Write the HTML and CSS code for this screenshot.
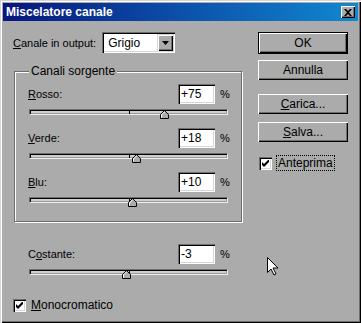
FILE: index.html
```
<!DOCTYPE html>
<html lang="it">
<head>
    <meta charset="UTF-8">
    <title>Miscelatore canale</title>
    <link rel="stylesheet" href="styles.css">
</head>
<body>
<div class="window">
    <div class="titlebar">
        <span class="title">Miscelatore canale</span>
        <span class="close">
            <svg width="8" height="7" viewBox="0 0 8 7"><path d="M0 0h2l2 2 2-2h2L5 3.5 8 7H6L4 5 2 7H0l3-3.5z" fill="#000"/></svg>
        </span>
    </div>
    <div class="content">
        <div class="left">
            <div class="output-row">
                <span class="lbl"><u>C</u>anale in output:</span>
                <div class="select">
                    <span class="select-text">Grigio</span>
                    <span class="select-btn">
                        <svg width="7" height="4" viewBox="0 0 7 4"><path d="M0 0h7L3.5 4z" fill="#000"/></svg>
                    </span>
                </div>
            </div>
            <div class="group">
                <span class="legend">Canali sorgente</span>
                <div class="chan">
                    <div class="chan-row">
                        <span class="chan-lbl"><u>R</u>osso:</span>
                        <span class="field">+75</span>
                        <span class="pct">%</span>
                    </div>
                    <div class="slider">
                        <svg class="thumb" style="left: 68.75%" width="9" height="9" viewBox="0 0 9 9"><path d="M.5 8.5v-4l4-4 4 4v4z" fill="#ababab" stroke="#000"/><path d="M1.5 7.5v-2.6l3-3" fill="none" stroke="#fff"/></svg>
                    </div>
                </div>
                <div class="chan">
                    <div class="chan-row">
                        <span class="chan-lbl"><u>V</u>erde:</span>
                        <span class="field">+18</span>
                        <span class="pct">%</span>
                    </div>
                    <div class="slider">
                        <svg class="thumb" style="left: 54.5%" width="9" height="9" viewBox="0 0 9 9"><path d="M.5 8.5v-4l4-4 4 4v4z" fill="#ababab" stroke="#000"/><path d="M1.5 7.5v-2.6l3-3" fill="none" stroke="#fff"/></svg>
                    </div>
                </div>
                <div class="chan">
                    <div class="chan-row">
                        <span class="chan-lbl"><u>B</u>lu:</span>
                        <span class="field">+10</span>
                        <span class="pct">%</span>
                    </div>
                    <div class="slider">
                        <svg class="thumb" style="left: 52.5%" width="9" height="9" viewBox="0 0 9 9"><path d="M.5 8.5v-4l4-4 4 4v4z" fill="#ababab" stroke="#000"/><path d="M1.5 7.5v-2.6l3-3" fill="none" stroke="#fff"/></svg>
                    </div>
                </div>
            </div>
            <div class="chan chan-const">
                <div class="chan-row">
                    <span class="chan-lbl">C<u>o</u>stante:</span>
                    <span class="field">-3</span>
                    <span class="pct">%</span>
                </div>
                <div class="slider">
                    <svg class="thumb" style="left: 49.25%" width="9" height="9" viewBox="0 0 9 9"><path d="M.5 8.5v-4l4-4 4 4v4z" fill="#ababab" stroke="#000"/><path d="M1.5 7.5v-2.6l3-3" fill="none" stroke="#fff"/></svg>
                </div>
            </div>
            <div class="check mono">
                <span class="box"><svg width="7" height="7" viewBox="0 0 7 7"><path d="M0 2l2 2 5-5v3L2 7 0 5z" fill="#000"/></svg></span>
                <span class="check-text"><u>M</u>onocromatico</span>
            </div>
        </div>
        <div class="right">
            <div class="btn btn-default">OK</div>
            <div class="btn">Annulla</div>
            <div class="btn btn-gap"><u>C</u>arica...</div>
            <div class="btn btn-save"><u>S</u>alva...</div>
            <div class="check preview">
                <span class="box"><svg width="7" height="7" viewBox="0 0 7 7"><path d="M0 2l2 2 5-5v3L2 7 0 5z" fill="#000"/></svg></span>
                <span class="check-text focus">Anteprima</span>
            </div>
        </div>
    </div>
    <svg class="cursor" width="12" height="19" viewBox="0 0 12 19"><path d="M.5.5v15l3.5-3.5 3 6 2-1-3-6h5z" fill="#fff" stroke="#000"/></svg>
</div>
</body>
</html>
```

FILE: styles.css
```
*{
    margin: 0;
    padding: 0;
}
body{
    font-family: "Liberation Sans", Arial, sans-serif;
    font-size: 11px;
    color: #000;
}
.window{
    position: relative;
    width: 361px;
    height: 323px;
    box-sizing: border-box;
    padding: 3px;
    background-color: #ababab;
    box-shadow: inset 1px 1px 0 #d6d6d6, inset 2px 2px 0 #fff, inset -1px -1px 0 #000, inset -2px -2px 0 #6e6e6e;
}
.titlebar{
    display: flex;
    align-items: center;
    height: 18px;
    padding-left: 3px;
    background: linear-gradient(to right, #08167c, #0a3f9e 35%, #1088d0);
}
.title{
    flex: 1;
    color: #fff;
    font-weight: bold;
    font-size: 12px;
}
.close{
    display: flex;
    align-items: center;
    justify-content: center;
    width: 14px;
    height: 12px;
    margin-right: 3px;
    background-color: #ababab;
    box-sizing: border-box;
    box-shadow: inset 1px 1px 0 #fff, inset -1px -1px 0 #000, inset -2px -2px 0 #6e6e6e;
}
.content{
    display: flex;
    padding: 11px 0 0 10px;
}
.left{
    width: 229px;
}
.output-row{
    display: flex;
    align-items: center;
    height: 21px;
}
.select{
    display: flex;
    align-items: center;
    width: 73px;
    height: 21px;
    margin-left: 6px;
    box-sizing: border-box;
    padding: 2px;
    background-color: #fff;
    box-shadow: inset 1px 1px 0 #6e6e6e, inset 2px 2px 0 #000, inset -1px -1px 0 #fff, inset -2px -2px 0 #d6d6d6;
}
.select-text{
    flex: 1;
    padding-left: 4px;
    font-size: 12px;
}
.select-btn{
    display: flex;
    align-items: center;
    justify-content: center;
    width: 16px;
    height: 17px;
    box-sizing: border-box;
    background-color: #ababab;
    box-shadow: inset 1px 1px 0 #d6d6d6, inset 2px 2px 0 #fff, inset -1px -1px 0 #000, inset -2px -2px 0 #6e6e6e;
}
.group{
    position: relative;
    width: 228px;
    height: 151px;
    margin: 18px 0 0 1px;
    box-sizing: border-box;
    padding: 12px 13px 0 13px;
    border: 1px solid #6e6e6e;
    box-shadow: inset 1px 1px 0 #fff, 1px 1px 0 #fff;
}
.legend{
    position: absolute;
    top: -8px;
    left: 14px;
    padding: 0 2px;
    background-color: #ababab;
    font-size: 12px;
}
.chan{
    margin-bottom: 13px;
}
.chan-row{
    display: flex;
    align-items: center;
    height: 20px;
}
.chan-lbl{
    flex: 1;
}
.field{
    width: 37px;
    height: 20px;
    box-sizing: border-box;
    padding: 3px 0 0 3px;
    font-size: 12px;
    background-color: #fff;
    box-shadow: inset 1px 1px 0 #6e6e6e, inset 2px 2px 0 #000, inset -1px -1px 0 #fff, inset -2px -2px 0 #d6d6d6;
}
.pct{
    width: 8px;
    margin-left: 5px;
}
.slider{
    position: relative;
    height: 6px;
    margin: 5px 0 0 1px;
    box-sizing: border-box;
    background-color: #cfcfcf;
    border: 1px solid;
    border-color: #6e6e6e #efefef #efefef #6e6e6e;
    box-shadow: inset 1px 1px 0 #000, inset -1px -1px 0 #9a9a9a;
}
.slider::after{
    content: "";
    position: absolute;
    left: 50%;
    top: 0;
    width: 1px;
    height: 4px;
    background-color: #000;
}
.thumb{
    position: absolute;
    top: 0;
    margin-left: -5px;
    z-index: 1;
}
.chan-const{
    margin-top: 22px;
    padding: 0 14px 0 15px;
}
.check{
    display: flex;
    align-items: center;
}
.box{
    display: flex;
    align-items: center;
    justify-content: center;
    width: 13px;
    height: 13px;
    box-sizing: border-box;
    background-color: #fff;
    box-shadow: inset 1px 1px 0 #6e6e6e, inset 2px 2px 0 #000, inset -1px -1px 0 #fff, inset -2px -2px 0 #d6d6d6;
}
.check-text{
    margin-left: 5px;
    font-size: 12px;
}
.mono{
    margin-top: 23px;
}
.right{
    display: flex;
    flex-direction: column;
    width: 90px;
    margin-left: 16px;
}
.btn{
    height: 20px;
    line-height: 20px;
    margin-top: 6px;
    box-sizing: border-box;
    text-align: center;
    font-size: 12px;
    box-shadow: inset 1px 1px 0 #fff, inset -1px -1px 0 #000, inset -2px -2px 0 #6e6e6e;
}
.btn-default{
    height: 22px;
    line-height: 20px;
    margin-top: 0;
    border: 1px solid #000;
}
.btn-gap{
    margin-top: 14px;
}
.btn-save{
    margin-top: 8px;
}
.preview{
    margin-top: 14px;
    margin-left: 1px;
}
.focus{
    padding: 0 1px;
    outline: 1px dotted #000;
}
.cursor{
    position: absolute;
    left: 267px;
    top: 257px;
}
```
